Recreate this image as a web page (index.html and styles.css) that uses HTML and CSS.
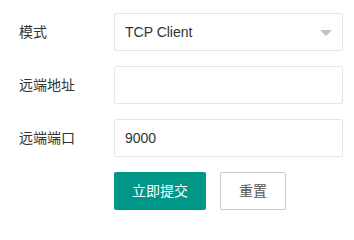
FILE: index.html
```html
<!DOCTYPE html>
<html lang="zh-CN">
<head>
<meta charset="utf-8">
<title>TCP</title>
<link rel="stylesheet" href="styles.css">
</head>
<body>
<form class="form">
  <div class="form-item">
    <label class="form-label">模式</label>
    <div class="input-block">
      <div class="select">
        <span class="select-value">TCP Client</span>
        <span class="select-arrow"></span>
      </div>
    </div>
  </div>
  <div class="form-item">
    <label class="form-label">远端地址</label>
    <div class="input-block">
      <div class="input"></div>
    </div>
  </div>
  <div class="form-item">
    <label class="form-label">远端端口</label>
    <div class="input-block">
      <div class="input">9000</div>
    </div>
  </div>
  <div class="form-item actions">
    <button type="button" class="btn">立即提交</button>
    <button type="button" class="btn btn-primary">重置</button>
  </div>
</form>
</body>
</html>
```
FILE: styles.css
```css
html, body {
  margin: 0;
  padding: 0;
  background: #fff;
}
body {
  width: 354px;
  height: 225px;
  overflow: hidden;
  font-family: "Liberation Sans", "Noto Sans CJK SC", sans-serif;
  font-size: 14px;
  color: #333;
}
.form {
  padding: 13px 11px 0 4px;
}
.form-item {
  display: flex;
  margin-bottom: 15px;
}
.form-label {
  width: 80px;
  padding: 9px 15px;
  line-height: 20px;
  color: #333;
}
.input-block {
  flex: 1;
}
.input, .select {
  box-sizing: border-box;
  height: 38px;
  line-height: 36px;
  border: 1px solid #e6e6e6;
  border-radius: 2px;
  padding-left: 10px;
  color: #333;
  background: #fff;
}
.select {
  display: flex;
  align-items: center;
  justify-content: space-between;
  padding-right: 10px;
}
.select-arrow {
  width: 0;
  height: 0;
  border-left: 6px solid transparent;
  border-right: 6px solid transparent;
  border-top: 6px solid #c2c2c2;
  margin-top: 1px;
}
.actions {
  padding-left: 110px;
  gap: 14px;
}
.btn {
  box-sizing: border-box;
  height: 38px;
  line-height: 38px;
  padding: 0 18px;
  border: none;
  border-radius: 2px;
  background: #009688;
  color: #fff;
  font-family: inherit;
  font-size: 14px;
  cursor: pointer;
}
.btn-primary {
  background: #fff;
  color: #555;
  border: 1px solid #c9c9c9;
  line-height: 36px;
  padding: 0 18px;
}
```
